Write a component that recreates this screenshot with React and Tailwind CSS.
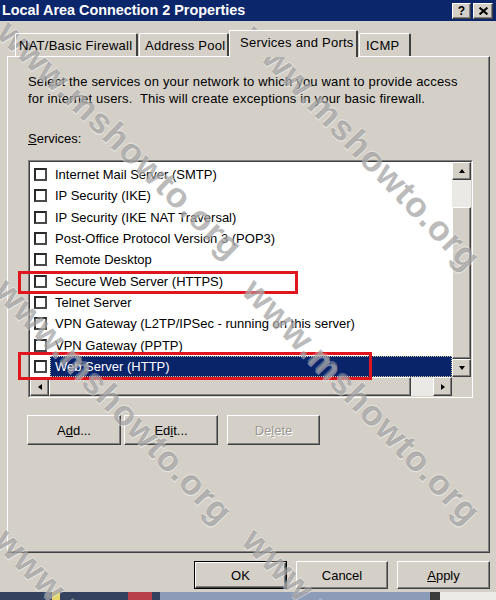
import React from "react";

const items = [
  "Internet Mail Server (SMTP)",
  "IP Security (IKE)",
  "IP Security (IKE NAT Traversal)",
  "Post-Office Protocol Version 3 (POP3)",
  "Remote Desktop",
  "Secure Web Server (HTTPS)",
  "Telnet Server",
  "VPN Gateway (L2TP/IPSec - running on this server)",
  "VPN Gateway (PPTP)",
  "Web Server (HTTP)",
];

const raised =
  "bg-[#d4d0c8] border border-t-white border-l-white border-r-[#404040] border-b-[#404040] shadow-[inset_-1px_-1px_0_#808080]";

function Arrow({ dir }) {
  const pts = {
    up: "1,5 4,1 7,5",
    down: "1,1 4,5 7,1",
    left: "5,1 1,4 5,7",
    right: "1,1 5,4 1,7",
  }[dir];
  const vb = dir === "up" || dir === "down" ? "0 0 8 6" : "0 0 6 8";
  const cls = dir === "up" || dir === "down" ? "w-[8px] h-[6px]" : "w-[6px] h-[8px]";
  return (
    <svg viewBox={vb} className={cls}>
      <polygon points={pts} fill="#000" />
    </svg>
  );
}

function Checkbox() {
  return (
    <span className="w-[13px] h-[13px] shrink-0 bg-white border-2 border-t-[#2a2a2a] border-l-[#2a2a2a] border-r-[#4a4a4a] border-b-[#4a4a4a]" />
  );
}

function Btn({ children, w, disabled }) {
  return (
    <div className={`${raised} ${w} h-[30px] flex items-center justify-center`}>
      <span
        className={
          disabled
            ? "text-[#9a9894] [text-shadow:1px_1px_0_#ffffff]"
            : "text-black"
        }
      >
        {children}
      </span>
    </div>
  );
}

function Watermark({ left, top, angle }) {
  return (
    <div
      className={`absolute origin-top-left ${angle} whitespace-nowrap text-[35px] tracking-[1px] font-bold leading-none text-[rgba(120,120,120,0.52)] [text-shadow:1px_1px_0_rgba(255,255,255,0.45),-1px_-1px_0_rgba(255,255,255,0.3)] pointer-events-none`}
      style={{ left, top }}
    >
      www.mshowto.org
    </div>
  );
}

export default function App() {
  return (
    <div className="relative w-[496px] h-[600px] overflow-hidden bg-[#d4d0c8] flex flex-col font-['Liberation_Sans',Arial,sans-serif] text-[13px] leading-[17px] text-black">
      {/* Title bar */}
      <div className="h-[21px] shrink-0 bg-[#0b266b] flex items-center justify-between pl-[2px] pr-[3px]">
        <span className="text-white font-bold text-[14.4px]">
          Local Area Connection 2 Properties
        </span>
        <div className="flex gap-[2px]">
          <div className={`${raised} w-[19px] h-[16px] flex items-center justify-center text-[12px] font-bold leading-none`}>?</div>
          <div className={`${raised} w-[20px] h-[16px] flex items-center justify-center`}>
            <svg viewBox="0 0 8 7" className="w-[9px] h-[8px]">
              <path d="M0.5 0.5 L7.5 6.5 M7.5 0.5 L0.5 6.5" stroke="#000" strokeWidth="1.8" />
            </svg>
          </div>
        </div>
      </div>

      {/* Tabs */}
      <div className="mt-[9px] h-[26px] shrink-0 flex items-end pl-[15px] relative z-10 tracking-[0.25px]">
        <div className="w-[123px] h-[23px] border-t border-l border-t-white border-l-white border-r-2 border-r-[#404040] rounded-t-[2px] flex items-center pl-[3px]">
          NAT/Basic Firewall
        </div>
        <div className="ml-px w-[90px] h-[23px] border-t border-l border-t-white border-l-white border-r-2 border-r-[#404040] rounded-t-[2px] flex items-center pl-[5px]">
          Address Pool
        </div>
        <div className="w-[129px] h-[27px] -mb-px bg-[#d4d0c8] border-t border-l border-t-white border-l-white border-r-2 border-r-[#404040] rounded-t-[2px] flex items-center pl-[10px] pb-[3px]">
          Services and Ports
        </div>
        <div className="ml-px w-[52px] h-[23px] border-t border-l border-t-white border-l-white border-r-2 border-r-[#404040] rounded-t-[2px] flex items-center pl-[6px]">
          ICMP
        </div>
      </div>

      {/* Panel */}
      <div className="ml-[7px] w-[483px] h-[497px] shrink-0 border border-t-white border-l-white border-r-[#404040] border-b-[#404040] shadow-[inset_-1px_-1px_0_#808080] pt-[16px] pl-[20px] flex flex-col">
        <p className="tracking-[0.18px]">
          Select the services on your network to which you want to provide access
          <br />
          for internet users.&nbsp; This will create exceptions in your basic firewall.
        </p>
        <p className="mt-[23px]">
          <span className="underline">S</span>ervices:
        </p>

        {/* Listbox */}
        <div className="mt-[13px] w-[445px] h-[238px] border border-t-[#808080] border-l-[#808080] border-r-white border-b-white">
          <div className="w-full h-full border border-t-[#404040] border-l-[#404040] border-r-[#d4d0c8] border-b-[#d4d0c8] bg-white flex">
            <div className="flex-1 flex flex-col">
              <div className="h-[215px] pt-[2px] flex flex-col overflow-hidden">
                {items.map((t, i) => {
                  const sel = i === items.length - 1;
                  return (
                    <div key={t} className="h-[21.3px] shrink-0 flex items-center pl-[4px]">
                      <Checkbox />
                      <span
                        className={
                          sel
                            ? "ml-[3px] pl-[5px] flex-1 self-stretch flex items-center bg-[#0a246a] text-white outline-1 outline-dotted outline-[#c9c6a8] -outline-offset-1 whitespace-nowrap"
                            : "ml-[3px] pl-[5px] whitespace-nowrap"
                        }
                      >
                        {t}
                      </span>
                    </div>
                  );
                })}
              </div>
              {/* Horizontal scrollbar */}
              <div className="h-[19px] flex bg-[#ebe9e5]">
                <div className={`${raised} w-[19px] h-full flex items-center justify-center`}>
                  <Arrow dir="left" />
                </div>
                <div className={`${raised} w-[362px] h-full`} />
                <div className="flex-1" />
                <div className={`${raised} w-[19px] h-full flex items-center justify-center`}>
                  <Arrow dir="right" />
                </div>
              </div>
            </div>
            {/* Vertical scrollbar */}
            <div className="w-[19px] flex flex-col bg-[#ebe9e5]">
              <div className={`${raised} h-[18px] flex items-center justify-center`}>
                <Arrow dir="up" />
              </div>
              <div className="h-[27px]" />
              <div className={`${raised} h-[152px]`} />
              <div className={`${raised} h-[18px] flex items-center justify-center`}>
                <Arrow dir="down" />
              </div>
              <div className="flex-1 bg-[#d4d0c8]" />
            </div>
          </div>
        </div>

        {/* Add / Edit / Delete */}
        <div className="mt-[17px] flex -ml-px">
          <Btn w="w-[94px]">
            A<span className="underline">d</span>d...
          </Btn>
          <div className="ml-[3px]">
            <Btn w="w-[94px]">
              Ed<span className="underline">i</span>t...
            </Btn>
          </div>
          <div className="ml-[9px]">
            <Btn w="w-[93px]" disabled>
              De<span className="underline">l</span>ete
            </Btn>
          </div>
        </div>
      </div>

      {/* Bottom buttons */}
      <div className="mt-[8px] h-[28px] shrink-0 flex justify-end pr-[6px] gap-[9px]">
        <div className="border border-black w-[93px] h-[28px]">
          <div className={`${raised} w-full h-full flex items-center justify-center`}>OK</div>
        </div>
        <div className={`${raised} w-[92px] h-[28px] flex items-center justify-center`}>Cancel</div>
        <div className={`${raised} w-[93px] h-[28px] flex items-center justify-center`}>
          <span>
            <span className="underline">A</span>pply
          </span>
        </div>
      </div>

      {/* Bottom strip (taskbar fragment) */}
      <div className="mt-[3px] h-[8px] shrink-0 flex">
        <div className="w-[160px] h-full bg-[#34425f] flex">
          <div className="ml-[52px] w-[8px] h-full bg-[#e8d66a]" />
          <div className="ml-[68px] w-[24px] h-full bg-[#b8404a]" />
        </div>
        <div className="w-[270px] h-full bg-[#8c9bb8]" />
        <div className="w-[10px] h-full bg-[#3b3b3b]" />
        <div className="flex-1 h-full bg-[#ecebe8]" />
      </div>

      {/* Red highlight boxes */}
      <div className="absolute left-[18px] top-[271px] w-[280px] h-[23px] border-[3px] border-[#e0161f] pointer-events-none" />
      <div className="absolute left-[18px] top-[352px] w-[354px] h-[28px] border-[3px] border-[#e0161f] pointer-events-none" />

      {/* Watermarks */}
      <Watermark left={16} top={14} angle="rotate-[44deg]" />
      <Watermark left={262} top={18} angle="rotate-[46deg]" />
      <Watermark left={14} top={272} angle="rotate-[46deg]" />
      <Watermark left={262} top={272} angle="rotate-[46deg]" />
      <Watermark left={14} top={522} angle="rotate-[46deg]" />
      <Watermark left={262} top={522} angle="rotate-[46deg]" />
    </div>
  );
}
